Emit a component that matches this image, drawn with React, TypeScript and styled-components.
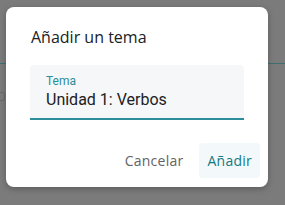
import React from "react";
import styled, { createGlobalStyle } from "styled-components";

const GlobalStyle = createGlobalStyle`
  html, body {
    margin: 0;
    padding: 0;
    background: #7b7b7b;
    font-family: Roboto, "Liberation Sans", sans-serif;
  }
`;

const Page = styled.div`
  position: relative;
  width: 285px;
  height: 205px;
  overflow: hidden;
  background: #7b7b7b;
`;

const Header = styled.div`
  height: 64px;
  border-bottom: 1px solid #3f6f70;
  box-sizing: border-box;
`;

const Faint = styled.div`
  margin-left: -6px;
  margin-top: 28px;
  width: 9px;
  height: 7px;
  border: 1px solid #6a6a6a;
  border-radius: 2px;
`;

const Dialog = styled.div`
  position: absolute;
  left: 6px;
  top: 7px;
  width: 262px;
  height: 180px;
  box-sizing: border-box;
  background: #ffffff;
  border-radius: 8px;
  box-shadow: 0 2px 6px rgba(0, 0, 0, 0.25);
  display: flex;
  flex-direction: column;
`;

const Title = styled.h2`
  margin: 0;
  padding: 19px 24px 0 25px;
  font-family: "Open Sans", Roboto, sans-serif;
  font-size: 16px;
  line-height: 22px;
  font-weight: 400;
  color: #202124;
`;

const Body = styled.div`
  padding: 17px 24px 0 24px;
`;

const Field = styled.div`
  height: 55px;
  box-sizing: border-box;
  background: #f5f7f8;
  border-radius: 4px 4px 0 0;
  border-bottom: 2px solid #2b8e9a;
  padding: 9px 16px 0 16px;
  display: flex;
  flex-direction: column;
`;

const Label = styled.label`
  font-size: 12px;
  line-height: 14px;
  color: #2b8e9a;
`;

const Value = styled.div`
  font-size: 16px;
  line-height: 22px;
  color: #202124;
  margin-top: 1px;
`;

const Actions = styled.div`
  margin-top: auto;
  display: flex;
  justify-content: flex-end;
  gap: 8px;
  padding: 0 8px 9px 8px;
`;

const Button = styled.button<{ $primary?: boolean }>`
  height: 35px;
  padding: 0 8px;
  border: none;
  border-radius: 4px;
  background: ${(p) => (p.$primary ? "#f3f8fa" : "transparent")};
  color: ${(p) => (p.$primary ? "#137982" : "#5f6368")};
  font-family: "Open Sans", Roboto, sans-serif;
  font-size: 14px;
  font-weight: 500;
  letter-spacing: 0.25px;
  cursor: pointer;
`;

const App: React.FC = () => {
  return (
    <>
      <GlobalStyle />
      <Page>
        <Header />
        <Faint />
        <Dialog>
          <Title>Añadir un tema</Title>
          <Body>
            <Field>
              <Label>Tema</Label>
              <Value>Unidad 1: Verbos</Value>
            </Field>
          </Body>
          <Actions>
            <Button type="button">Cancelar</Button>
            <Button type="button" $primary>
              Añadir
            </Button>
          </Actions>
        </Dialog>
      </Page>
    </>
  );
};

export default App;
